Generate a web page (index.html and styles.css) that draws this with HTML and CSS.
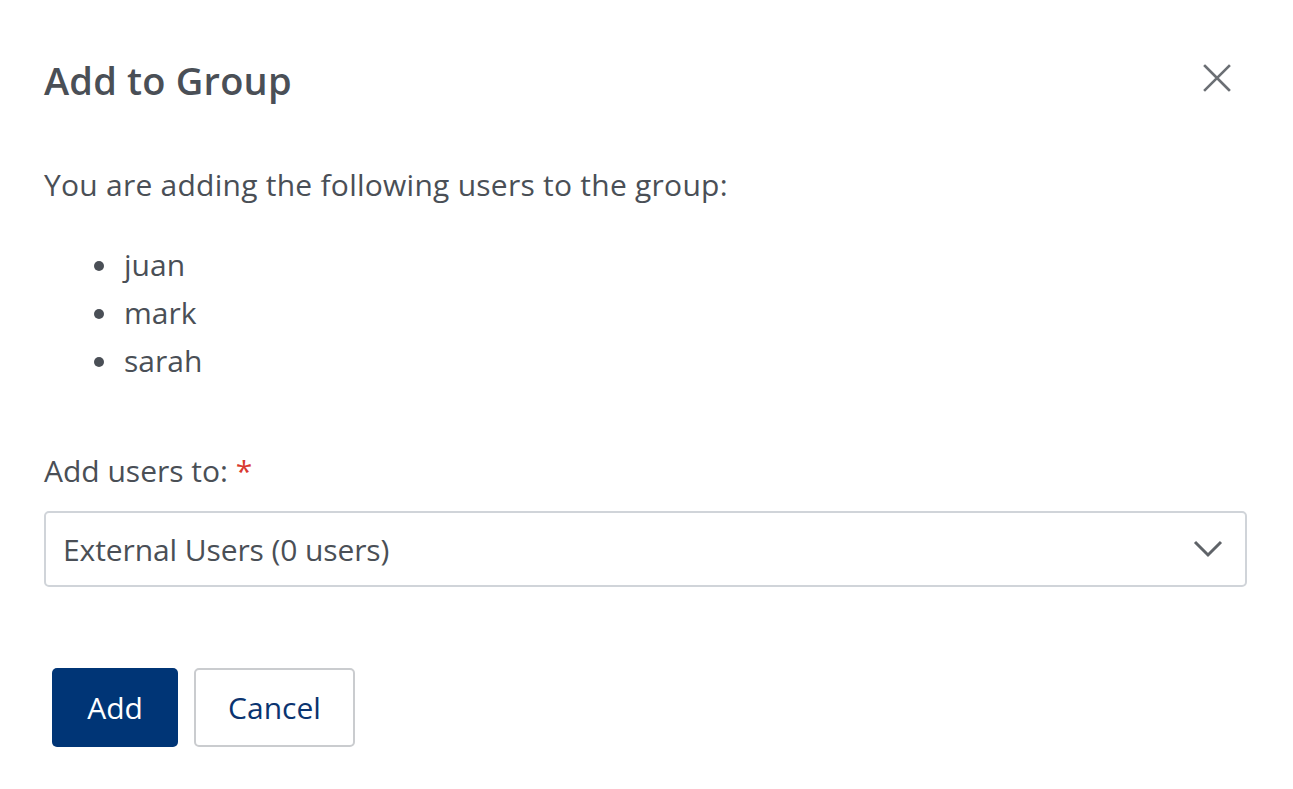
FILE: index.html
```html
<!DOCTYPE html>
<html lang="en">
<head>
<meta charset="utf-8">
<title>Add to Group</title>
<link rel="stylesheet" href="styles.css">
</head>
<body>
<div class="dialog">
  <div class="header">
    <h1 class="title">Add to Group</h1>
    <button class="close" aria-label="Close">
      <svg width="28" height="28" viewBox="0 0 28 28"><path d="M2 2 L26 26 M26 2 L2 26" stroke="#6b6f74" stroke-width="2.6" fill="none" stroke-linecap="square"/></svg>
    </button>
  </div>
  <p class="intro">You are adding the following users to the group:</p>
  <ul class="users">
    <li>juan</li>
    <li>mark</li>
    <li>sarah</li>
  </ul>
  <label class="label">Add users to: <span class="req">*</span></label>
  <div class="select">
    <span class="select-text">External Users (0 users)</span>
    <svg class="chevron" width="30" height="18" viewBox="0 0 30 18"><path d="M2 2 L15 15 L28 2" stroke="#5f6368" stroke-width="3" fill="none"/></svg>
  </div>
  <div class="actions">
    <button class="btn btn-primary">Add</button>
    <button class="btn btn-secondary">Cancel</button>
  </div>
</div>
</body>
</html>
```
FILE: styles.css
```css
html, body {
  margin: 0;
  padding: 0;
  background: #ffffff;
}
body {
  font-family: "Open Sans", "Noto Sans", "Liberation Sans", sans-serif;
  color: #4a4f56;
}
.dialog {
  padding: 56px 46px 0 44px;
}
.header {
  display: flex;
  align-items: center;
  justify-content: space-between;
  height: 48px;
}
.title {
  margin: 0;
  font-size: 38px;
  font-weight: 600;
  line-height: 48px;
  letter-spacing: 0.2px;
  color: #4a4f56;
}
.close {
  border: 0;
  background: none;
  padding: 0;
  margin-right: 16px;
  margin-top: -4px;
  width: 28px;
  height: 28px;
  display: flex;
}
.intro {
  margin: 61px 0 0 0;
  font-size: 30px;
  line-height: 40px;
  letter-spacing: 0.25px;
}
.users {
  list-style: none;
  margin: 36px 0 0 0;
  padding: 0 0 0 50px;
}
.users li {
  position: relative;
  font-size: 30px;
  line-height: 48px;
  padding-left: 30px;
}
.users li::before {
  content: "";
  position: absolute;
  left: 0;
  top: 20px;
  width: 10px;
  height: 10px;
  border-radius: 50%;
  background: #4a4f56;
}
.label {
  display: block;
  margin-top: 66px;
  font-size: 30px;
  line-height: 40px;
}
.req {
  color: #d93a2f;
}
.select {
  margin-top: 20px;
  height: 76px;
  box-sizing: border-box;
  border: 2px solid #d0d4d9;
  border-radius: 5px;
  display: flex;
  align-items: center;
  justify-content: space-between;
  padding: 0 22px 0 17px;
}
.select-text {
  font-size: 30px;
  letter-spacing: -0.1px;
}
.chevron {
  display: block;
}
.actions {
  display: flex;
  gap: 16px;
  margin-top: 81px;
  padding-left: 8px;
}
.btn {
  height: 79px;
  box-sizing: border-box;
  border-radius: 5px;
  font-family: inherit;
  font-size: 30px;
  padding: 0;
}
.btn-primary {
  width: 126px;
  background: #003576;
  color: #ffffff;
  border: 0;
}
.btn-secondary {
  width: 161px;
  background: #ffffff;
  color: #0a3470;
  border: 2px solid #cacccf;
}
```
